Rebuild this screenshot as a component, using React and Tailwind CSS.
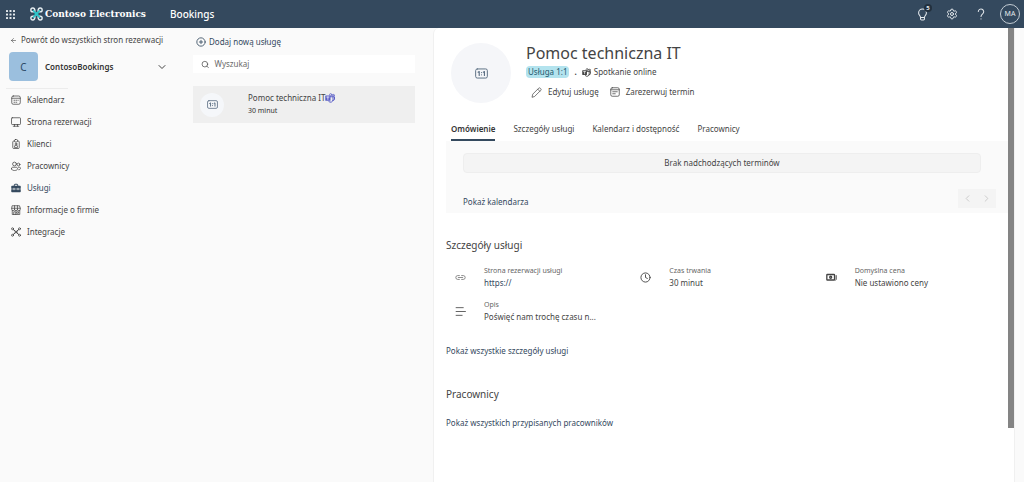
import React, { useState } from 'react';
import { ArrowLeft, CirclePlus, Search, ChevronDown, ChevronLeft, ChevronRight, Settings, Clock } from 'lucide-react';

const Svg = ({ size = 10, children, ...props }) => (
  <svg
    width={size}
    height={size}
    viewBox="0 0 20 20"
    fill="none"
    stroke="currentColor"
    strokeWidth="1.5"
    strokeLinecap="round"
    strokeLinejoin="round"
    className="shrink-0"
    aria-hidden="true"
    {...props}
  >
    {children}
  </svg>
);

const CalendarIcon = () => (
  <Svg>
    <rect x="1.5" y="2" width="17" height="16.5" rx="3" />
    <path d="M1.5 6.5h17M6 14.5h1.5M6 10.5h1.5M10 10.5h1.5M10 14.5h1.5M14 10.5h.5" />
  </Svg>
);

const MonitorIcon = () => (
  <Svg>
    <rect x="1" y="1.5" width="18" height="13.5" rx="1.5" />
    <path d="M7 15v3.5M13 15v3.5M4.5 18.5h11" />
  </Svg>
);

const BadgeIcon = () => (
  <Svg>
    <path d="M7 4H5.5A2 2 0 0 0 3.5 6v11a2 2 0 0 0 2 2h9a2 2 0 0 0 2-2V6a2 2 0 0 0-2-2H13" />
    <rect x="7" y="1" width="6" height="5" rx="2" />
    <circle cx="10" cy="10" r="1.8" />
    <path d="M7 16v-1.5A1.5 1.5 0 0 1 8.500 13h3a1.5 1.5 0 0 1 1.5 1.5V16z" />
  </Svg>
);

const PeopleIcon = () => (
  <Svg>
    <circle cx="7" cy="6" r="3.8" />
    <circle cx="15" cy="7" r="2.8" />
    <path d="M1 15.5c0-2 1-3 2.5-3h7c1.5 0 2.5 1 2.5 3 0 2.3-2.5 3.5-6 3.5s-6-1.2-6-3.5zM15 12.5h2c1.3 0 2 .8 2 2 0 2-1.5 3-3.5 3" />
  </Svg>
);

const ToolboxIcon = () => (
  <Svg>
    <path d="M6.5 5.5V4A1.5 1.5 0 0 1 8 2.5h4A1.5 1.5 0 0 1 13.5 4v1.5" strokeWidth="2" />
    <path d="M2 5.5h16A1.5 1.5 0 0 1 19.5 7v4.5H.5V7A1.5 1.5 0 0 1 2 5.500zM.5 12.5h19V17a1.500 1.500 0 0 1-1.500 1.500H2A1.500 1.500 0 0 1 .5 17z" fill="currentColor" stroke="none" />
    <path d="M6 10.500v3M14 10.500v3" stroke="#fafafa" />
  </Svg>
);

const ShopIcon = () => (
  <Svg>
    <path d="M3 1.5h14l1.5 5v2a2.8 2.8 0 0 1-5.6 0 2.9 2.9 0 0 1-5.8 0 2.8 2.8 0 0 1-5.6 0v-2zM1.5 6.5h17M7.1 1.5v7M12.9 1.5v7M2.5 11v8h15v-8" />
    <path d="M5.5 19v-5.5h4V19M12 13.5h3v3h-3z" />
  </Svg>
);

const IntegrationIcon = () => (
  <Svg>
    <circle cx="3" cy="3.5" r="2" />
    <circle cx="17" cy="3.5" r="2" />
    <circle cx="3" cy="16.5" r="2" />
    <circle cx="17" cy="16.5" r="2" />
    <circle cx="10" cy="10" r="2" />
    <path d="M4.5 5l4 3.5M15.5 5l-4 3.5M4.5 15l4-3.5M15.5 15l-4-3.5" strokeWidth="2" />
  </Svg>
);

const OneToOneIcon = ({ size }) => (
  <Svg size={size}>
    <rect x="1" y="3" width="18" height="14" rx="2.5" />
    <path d="M4.8 8l1.7-1v6M12.8 8l1.7-1v6M10 8.5v.1M10 12v.1" strokeWidth="1.8" />
  </Svg>
);

const TeamsIcon = ({ size = 10 }) => (
  <Svg size={size}>
    <circle cx="11.5" cy="3.5" r="2.3" />
    <circle cx="16.8" cy="4.5" r="1.7" />
    <path d="M10 7.500h6v6a5 5 0 0 1-8.500 3.500M16 7.500h3V12a3 3 0 0 1-3 3" strokeWidth="2" />
    <rect x="0.5" y="5" width="10.5" height="10.5" rx="1" fill="currentColor" stroke="none" />
    <path d="M3.5 8H8M5.750 8v4.800" stroke="#fff" />
  </Svg>
);

const PencilIcon = () => (
  <Svg size={11} strokeWidth="1.3">
    <path d="M2 18l1.2-5L14 2.2a2 2 0 0 1 2.8 0l1 1a2 2 0 0 1 0 2.8L7 16.8zM12.3 4L16 7.7" />
  </Svg>
);

const BookIcon = () => (
  <Svg size={10}>
    <rect x="1.5" y="1.5" width="17" height="17" rx="3" />
    <path d="M1.5 5.5h17M5.5 9.5h9M5.5 13.500h5" />
  </Svg>
);

const LinkIcon = () => (
  <Svg size={11} stroke="#777">
    <path d="M8 6.500H5a3.500 3.500 0 0 0 0 7h3M12 6.500h3a3.500 3.500 0 0 1 0 7h-3M6 10h8" />
  </Svg>
);

const MoneyIcon = () => (
  <Svg size={11} strokeWidth="2.4">
    <rect x="1.5" y="4.5" width="14" height="10" rx="1" />
    <circle cx="8.5" cy="9.5" r="1.8" />
    <path d="M18.500 6.500v6.500a3 3 0 0 1-1 2" strokeWidth="1.8" />
  </Svg>
);

const LinesIcon = () => (
  <Svg size={11}>
    <path d="M2 3h13M2 10h17M2 17h11" />
  </Svg>
);

const BulbIcon = () => (
  <Svg size={13} strokeWidth="1.6">
    <path d="M7 14.5c0-2.500-3-3.500-3-7a6 6 0 0 1 12 0c0 3.500-3 4.500-3 7zM7 14.500V17a1.500 1.500 0 0 0 1.500 1.500h3A1.500 1.500 0 0 0 13 17v-2.500" />
  </Svg>
);

const HelpIcon = () => (
  <Svg size={12} strokeWidth="1.7">
    <path d="M5.5 6A4.500 4.500 0 1 1 13 9.400c-1.700 1.400-3 2.300-3 4.600M10 18v.2" />
  </Svg>
);

const ContosoLogo = () => (
  <svg width="13" height="14" viewBox="0 0 26 28" fill="none" strokeWidth="2.8" aria-hidden="true">
    <g stroke="#e6eef2">
      <path d="M10 9.500C10 4 8 2 5.500 2a3.800 3.800 0 0 0 0 7.600c2 0 3-.6 4.500-.1" />
      <path d="M16 9.500C16 4 18 2 20.500 2a3.800 3.800 0 0 1 0 7.600c-2 0-3-.6-4.500-.1" />
      <path d="M10 18.500C10 24 8 26 5.500 26a3.800 3.800 0 0 1 0-7.600c2 0 3 .6 4.500.1" />
      <path d="M16 18.500C16 24 18 26 20.500 26a3.800 3.800 0 0 0 0-7.600c-2 0-3 .6-4.500.1" />
    </g>
    <path d="M6 6.500l7 7.500 7-7.500M6 21.500l7-7.500 7 7.500" stroke="#2cc4c9" strokeWidth="3.500" />
    <circle cx="13" cy="14" r="4" fill="#2cc4c9" />
  </svg>
);

const navItems = [
  { label: 'Kalendarz', icon: CalendarIcon },
  { label: 'Strona rezerwacji', icon: MonitorIcon },
  { label: 'Klienci', icon: BadgeIcon },
  { label: 'Pracownicy', icon: PeopleIcon },
  { label: 'Usługi', icon: ToolboxIcon, active: true },
  { label: 'Informacje o firmie', icon: ShopIcon },
  { label: 'Integracje', icon: IntegrationIcon },
];

const tabs = ['Omówienie', 'Szczegóły usługi', 'Kalendarz i dostępność', 'Pracownicy'];

function Header() {
  return (
    <header className="flex h-7 shrink-0 items-center bg-[#34495e] text-white">
      <button aria-label="Aplikacje" className="ml-[6px]">
        <svg width="9" height="9" viewBox="0 0 9 9" fill="#e4e9ed" aria-hidden="true">
          {[0, 3.5, 7].map((y) => [0, 3.5, 7].map((x) => <rect key={`${x}-${y}`} x={x} y={y} width="2" height="2" rx="0.5" />))}
        </svg>
      </button>
      <a href="#home" className="ml-[15px] flex w-[120px] items-center gap-[2px] whitespace-nowrap">
        <ContosoLogo />
        <span className="font-['DejaVu_Serif_Condensed','DejaVu_Serif',serif] text-[10px] font-bold leading-4">Contoso Electronics</span>
      </a>
      <a href="#bookings" className="ml-5 text-[10px] font-medium leading-4">Bookings</a>

      <div className="ml-auto flex items-center gap-[13px] pr-1 text-[#e4e9ed]">
        <div className="flex items-center gap-[17px]">
          <button aria-label="Nowości" className="relative">
            <BulbIcon />
            <span className="absolute -top-1 left-2 flex h-2 w-2 items-center justify-center rounded-full bg-[#22303e] text-[6px] font-bold">5</span>
          </button>
          <button aria-label="Ustawienia"><Settings size={12} /></button>
          <button aria-label="Pomoc"><HelpIcon /></button>
        </div>
        <button className="flex h-5 w-5 items-center justify-center rounded-full border border-[#c3ccd4] text-[7px]">MA</button>
      </div>
    </header>
  );
}

function Sidebar() {
  return (
    <aside className="flex w-[193px] shrink-0 flex-col">
      <a href="#all" className="mt-[6px] ml-[10px] flex h-3 items-center gap-1">
        <ArrowLeft size={7} />
        <span>Powrót do wszystkich stron rezerwacji</span>
      </a>
      <button className="mt-[6px] flex items-center pr-[25px] pl-[9px]">
        <span className="flex h-[29px] w-[29px] items-center justify-center rounded-sm bg-[#9bbfde] text-[10px] text-[#2c4a66]">C</span>
        <span className="ml-[7px] font-semibold text-[#333]">ContosoBookings</span>
        <ChevronDown size={12} className="ml-auto" />
      </button>
      <hr className="mt-[7px] ml-[6px] w-[62px] border-[#ececec]" />
      <nav className="flex flex-col">
        {navItems.map((item) => (
          <a
            key={item.label}
            href="#nav"
            className={`flex h-[22px] items-center gap-[6px] pl-[11px] ${item.active ? 'text-[#34495e]' : ''}`}
          >
            <item.icon />
            <span>{item.label}</span>
          </a>
        ))}
      </nav>
    </aside>
  );
}

function ServiceList() {
  return (
    <section className="flex w-[222px] shrink-0 flex-col">
      <button className="mt-2 ml-[3px] flex h-3 items-center gap-[3px] text-[#34495e]">
        <CirclePlus size={10} />
        <span>Dodaj nową usługę</span>
      </button>
      <label className="mt-[7px] flex h-[18px] items-center gap-[5px] bg-white pl-2">
        <Search size={9} />
        <input type="text" placeholder="Wyszukaj" aria-label="Wyszukaj" className="w-full outline-none placeholder:text-[#6a6a6a]" />
      </label>
      <button className="mt-[13px] flex h-[37px] items-center bg-[#efefef] pl-[7px] text-left">
        <span className="flex h-6 w-6 items-center justify-center rounded-full bg-[#f5f7fa] text-[#5d7085]">
          <OneToOneIcon size={11} />
        </span>
        <span className="ml-6 flex flex-col">
          <span className="flex items-center">
            Pomoc techniczna IT
            <span className="text-[#5b5fc7]"><TeamsIcon /></span>
          </span>
          <span className="text-[7px] leading-[14px] text-[#333]">30 minut</span>
        </span>
      </button>
    </section>
  );
}

function Detail({ icon, label, children }) {
  return (
    <div className="flex items-center gap-[18px] pl-[9px]">
      {icon}
      <div className="flex flex-col">
        <span className="text-[7px] text-[#666]">{label}</span>
        {children}
      </div>
    </div>
  );
}

function ServiceDetails() {
  const [tab, setTab] = useState('Omówienie');

  return (
    <main className="min-w-0 flex-1 rounded-tl-md border-l border-[#f0f0f0] bg-white pl-3">
      <div className="flex items-start gap-[15px] pt-[15px] pl-[5px]">
        <div className="flex h-[60px] w-[60px] shrink-0 items-center justify-center rounded-full bg-[#f5f6f9] text-[#5d7085]">
          <OneToOneIcon size={13} />
        </div>
        <div className="flex flex-col">
          <h1 className="text-[16px] leading-5 text-[#444]">Pomoc techniczna IT</h1>
          <div className="mt-[3px] flex items-center">
            <span className="rounded-sm bg-[#b3e3ee] px-[2px] text-[#1f5a6e]">Usługa 1:1</span>
            <span className="mx-[5px] font-bold">.</span>
            <TeamsIcon size={9} />
            <span className="ml-[3px]">Spotkanie online</span>
          </div>
          <div className="mt-2 flex items-center pl-[5px]">
            <button className="flex items-center gap-[6px]">
              <PencilIcon />
              Edytuj usługę
            </button>
            <button className="ml-[11px] flex items-center gap-[6px]">
              <BookIcon />
              Zarezerwuj termin
            </button>
          </div>
        </div>
      </div>

      <div className="mt-4 flex gap-[18px] pl-[5px]" role="tablist">
        {tabs.map((t) => (
          <button
            key={t}
            role="tab"
            aria-selected={tab === t}
            onClick={() => setTab(t)}
            className={`h-[22px] border-b-2 ${tab === t ? 'border-[#34495e] font-semibold text-[#333]' : 'border-transparent'}`}
          >
            {t}
          </button>
        ))}
      </div>

      <section className="bg-[#fafafa] pt-3 pr-3 pb-[5px] pl-[17px]">
        <p className="mr-[15px] rounded-sm border border-[#eee] bg-[#f4f4f4] text-center leading-[18px]">Brak nadchodzących terminów</p>
        <div className="mt-4 flex items-center justify-between">
          <a href="#calendar" className="pt-[6px] text-[#34495e]">Pokaż kalendarza</a>
          <div className="flex h-[19px] items-center gap-2 bg-[#f4f4f4] px-1 text-[#c8c8c8]">
            <button aria-label="Poprzedni"><ChevronLeft size={11} /></button>
            <button aria-label="Następny"><ChevronRight size={11} /></button>
          </div>
        </div>
      </section>

      <section className="mt-6">
        <h2 className="text-[10px] leading-4">Szczegóły usługi</h2>
        <div className="mt-3 grid grid-cols-3 gap-y-[10px] pr-[6px]">
          <Detail icon={<LinkIcon />} label="Strona rezerwacji usługi">
            <a href="#page" className="text-[#34495e]">https://</a>
          </Detail>
          <Detail icon={<Clock size={11} />} label="Czas trwania">
            <span>30 minut</span>
          </Detail>
          <Detail icon={<MoneyIcon />} label="Domyślna cena">
            <span>Nie ustawiono ceny</span>
          </Detail>
          <Detail icon={<LinesIcon />} label="Opis">
            <span>Poświęć nam trochę czasu n...</span>
          </Detail>
        </div>
        <a href="#details" className="mt-[22px] block text-[#34495e]">Pokaż wszystkie szczegóły usługi</a>
      </section>

      <section className="mt-[29px]">
        <h2 className="text-[10px] leading-4">Pracownicy</h2>
        <a href="#staff" className="mt-[15px] block text-[#34495e]">Pokaż wszystkich przypisanych pracowników</a>
      </section>
    </main>
  );
}

export default function App() {
  return (
    <div className="flex min-h-screen flex-col bg-[#fafafa] font-['Noto_Sans',sans-serif] text-[8px] leading-3 text-[#444]">
      <Header />
      <div className="flex flex-1">
        <Sidebar />
        <ServiceList />
        <div className="ml-[18px] flex min-w-0 flex-1">
          <ServiceDetails />
          <div className="w-[6px] shrink-0 bg-white">
            <div className="h-[88%] bg-[#848484]" />
          </div>
        </div>
        <div className="w-[10px] shrink-0 border-l border-[#f0f0f0]" />
      </div>
    </div>
  );
}
